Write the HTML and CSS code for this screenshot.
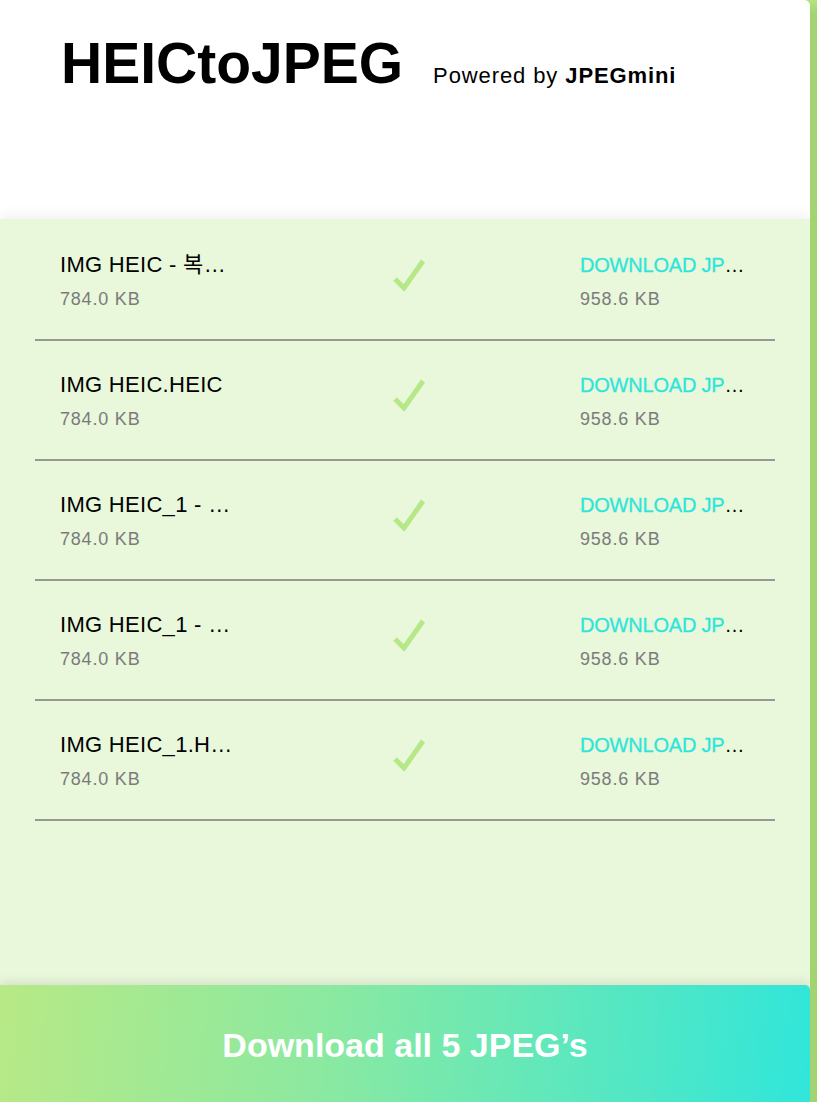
FILE: index.html
```html
<!DOCTYPE html>
<html lang="en">
<head>
    <meta charset="UTF-8">
    <meta name="viewport" content="width=device-width, initial-scale=1.0">
    <title>HEICtoJPEG</title>
    <link rel="stylesheet" href="styles.css">
</head>
<body>

    <div class="panel">
        <!-- Header -->
        <header class="top">
            <h1 class="logo">HEICtoJPEG</h1>
            <span class="powered">Powered by <b>JPEGmini</b></span>
        </header>

        <!-- Converted files -->
        <ul class="files">
            <li class="file">
                <div class="info">
                    <div class="name">IMG HEIC - 복사본.HEIC</div>
                    <div class="size">784.0 KB</div>
                </div>
                <svg class="check" width="40" height="36" viewBox="0 0 40 36"><path d="M5 23 L14 32 L33 5" fill="none" stroke="#b6e887" stroke-width="5"/></svg>
                <div class="info">
                    <div class="name link"><a href="#">DOWNLOAD JPEG</a></div>
                    <div class="size">958.6 KB</div>
                </div>
            </li>
            <li class="file">
                <div class="info">
                    <div class="name">IMG HEIC.HEIC</div>
                    <div class="size">784.0 KB</div>
                </div>
                <svg class="check" width="40" height="36" viewBox="0 0 40 36"><path d="M5 23 L14 32 L33 5" fill="none" stroke="#b6e887" stroke-width="5"/></svg>
                <div class="info">
                    <div class="name link"><a href="#">DOWNLOAD JPEG</a></div>
                    <div class="size">958.6 KB</div>
                </div>
            </li>
            <li class="file">
                <div class="info">
                    <div class="name">IMG HEIC_1 - 복사본.HEIC</div>
                    <div class="size">784.0 KB</div>
                </div>
                <svg class="check" width="40" height="36" viewBox="0 0 40 36"><path d="M5 23 L14 32 L33 5" fill="none" stroke="#b6e887" stroke-width="5"/></svg>
                <div class="info">
                    <div class="name link"><a href="#">DOWNLOAD JPEG</a></div>
                    <div class="size">958.6 KB</div>
                </div>
            </li>
            <li class="file">
                <div class="info">
                    <div class="name">IMG HEIC_1 - 복사본 (2).HEIC</div>
                    <div class="size">784.0 KB</div>
                </div>
                <svg class="check" width="40" height="36" viewBox="0 0 40 36"><path d="M5 23 L14 32 L33 5" fill="none" stroke="#b6e887" stroke-width="5"/></svg>
                <div class="info">
                    <div class="name link"><a href="#">DOWNLOAD JPEG</a></div>
                    <div class="size">958.6 KB</div>
                </div>
            </li>
            <li class="file">
                <div class="info">
                    <div class="name">IMG HEIC_1.HEIC</div>
                    <div class="size">784.0 KB</div>
                </div>
                <svg class="check" width="40" height="36" viewBox="0 0 40 36"><path d="M5 23 L14 32 L33 5" fill="none" stroke="#b6e887" stroke-width="5"/></svg>
                <div class="info">
                    <div class="name link"><a href="#">DOWNLOAD JPEG</a></div>
                    <div class="size">958.6 KB</div>
                </div>
            </li>
        </ul>

        <!-- Download all -->
        <button class="download-all">Download all 5 JPEG’s</button>
    </div>

</body>
</html>
```

FILE: styles.css
```css
html, body {
    margin: 0;
    padding: 0;
    overflow: hidden;
}

body {
    font-family: 'Liberation Sans', Arial, 'Noto Sans CJK KR', sans-serif;
    background: linear-gradient(180deg, #b4e37f 0, #a2d472 14px, #a2d472 100%);
    color: #111;
}

.panel {
    width: 810px;
    height: 1105px;
    display: flex;
    flex-direction: column;
    background-color: #e9f7db;
    border-top-right-radius: 6px;
    overflow: hidden;
}

/* Header */
.top {
    height: 219px;
    box-sizing: border-box;
    padding: 35px 0 0 61px;
    background-color: #fff;
    display: flex;
    align-items: baseline;
    gap: 30px;
}

.logo {
    margin: 0;
    font-size: 57px;
    line-height: 1;
    font-weight: 700;
    letter-spacing: 0;
    color: #000;
}

.powered {
    font-size: 22px;
    letter-spacing: 0.9px;
    color: #000;
}

.powered b {
    font-weight: 700;
}

/* File list */
.files {
    flex: 1;
    list-style: none;
    margin: 0;
    padding: 2px 35px 0;
    box-shadow: 0 -5px 12px rgba(0, 0, 0, 0.05);
}

.file {
    height: 120px;
    box-sizing: border-box;
    padding: 31px 0 0 25px;
    border-bottom: 2px solid #979797;
    display: grid;
    grid-template-columns: 330px 190px 1fr;
    align-items: start;
}

.info {
    display: flex;
    flex-direction: column;
    gap: 10px;
}

.name {
    width: 182px;
    font-size: 22px;
    line-height: 26px;
    letter-spacing: 0.3px;
    white-space: nowrap;
    overflow: hidden;
    text-overflow: ellipsis;
    color: #000;
}

.name.link {
    width: 165px;
    font-size: 20px;
    letter-spacing: -0.2px;
}

.name.link a {
    color: #2ee5da;
    text-decoration: none;
    -webkit-text-stroke: 0.3px #2ee5da;
}

.size {
    font-size: 18px;
    line-height: 22px;
    letter-spacing: 0.8px;
    color: #7b7b7b;
}

.check {
    margin-top: 4px;
}

/* Download all button */
.download-all {
    height: 120px;
    border: none;
    border-top-right-radius: 5px;
    background: linear-gradient(95deg, #b8e986 0%, #8be9a0 40%, #30e6da 100%);
    color: #fff;
    font-family: inherit;
    font-size: 34px;
    font-weight: 700;
    cursor: pointer;
    box-shadow: 0 -4px 10px rgba(0, 0, 0, 0.08);
}
```
